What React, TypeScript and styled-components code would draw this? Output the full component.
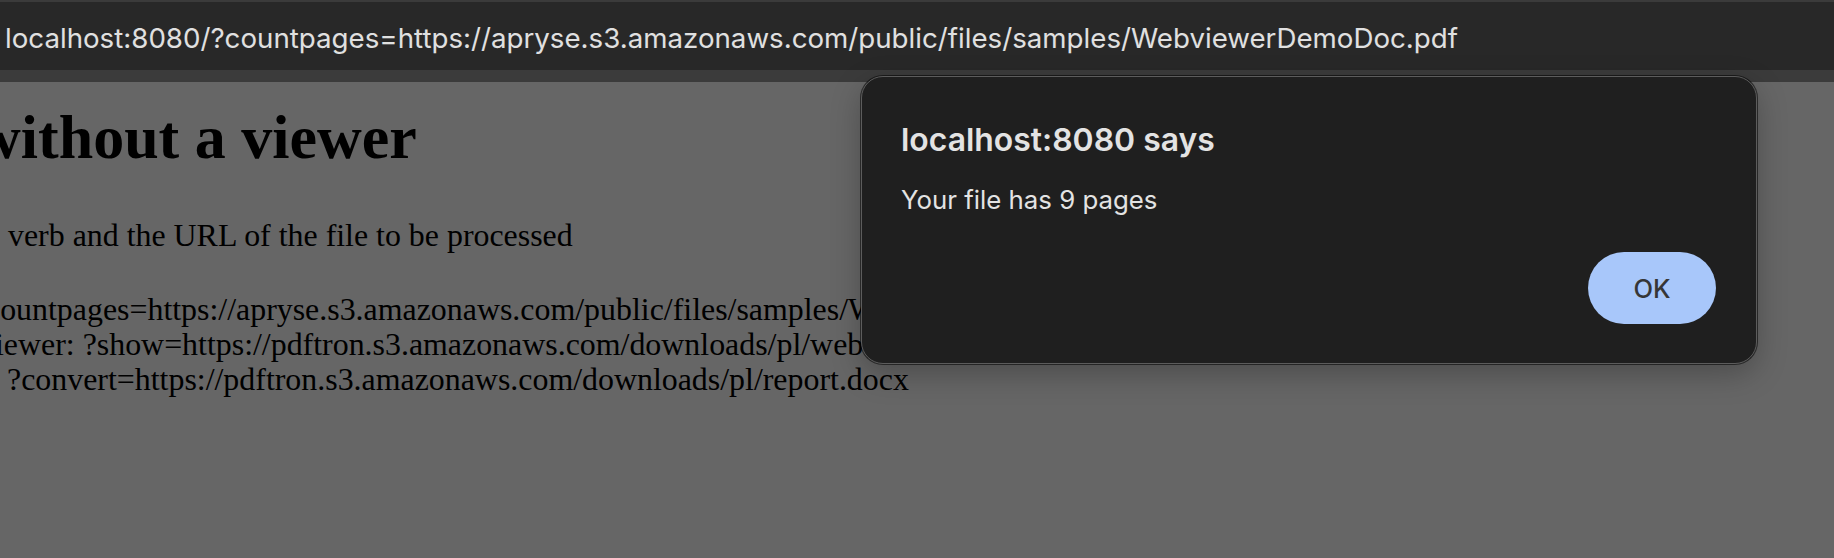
import styled, { createGlobalStyle } from "styled-components";

const GlobalStyle = createGlobalStyle`
  html, body {
    margin: 0;
    padding: 0;
    background: #666666;
  }
  * {
    box-sizing: border-box;
  }
`;

const pageUrl =
  "localhost:8080/?countpages=https://apryse.s3.amazonaws.com/public/files/samples/WebviewerDemoDoc.pdf";

const lines = [
  {
    text: "countpages=https://apryse.s3.amazonaws.com/public/files/samples/WebviewerDemoDoc.pdf",
    shift: -14,
  },
  {
    text: "iewer: ?show=https://pdftron.s3.amazonaws.com/downloads/pl/webviewer-demo.pdf",
    shift: -5,
  },
  {
    text: "?convert=https://pdftron.s3.amazonaws.com/downloads/pl/report.docx",
    shift: 7,
  },
];

export default function App() {
  return (
    <>
      <GlobalStyle />
      <Screen>
        <Toolbar>
          <AddressBar>
            <UrlText>{pageUrl}</UrlText>
          </AddressBar>
        </Toolbar>
        <Page>
          <Heading $shift={-24}>without a viewer</Heading>
          <Para $shift={8}>verb and the URL of the file to be processed</Para>
          <List>
            {lines.map((line) => (
              <Line key={line.text} $shift={line.shift}>
                {line.text}
              </Line>
            ))}
          </List>
        </Page>
        <Alert role="alertdialog">
          <AlertTitle>localhost:8080 says</AlertTitle>
          <AlertMessage>Your file has 9 pages</AlertMessage>
          <AlertFooter>
            <OkButton type="button">OK</OkButton>
          </AlertFooter>
        </Alert>
      </Screen>
    </>
  );
}

const Screen = styled.div`
  position: relative;
  display: flex;
  flex-direction: column;
  width: 100%;
  height: 100vh;
  overflow: hidden;
`;

const Toolbar = styled.div`
  flex: 0 0 82px;
  border-top: 2px solid #3b3b3b;
  border-bottom: 12px solid #3b3b3b;
  background: #282828;
`;

const AddressBar = styled.div`
  display: flex;
  align-items: center;
  height: 100%;
  padding: 0 0 0 5px;
`;

const UrlText = styled.span`
  font-family: Inter, "Noto Sans", sans-serif;
  font-size: 27.7px;
  line-height: 34px;
  color: #e0e0e0;
  white-space: nowrap;
  margin-top: 4px;
`;

const Page = styled.main`
  flex: 1;
  display: flex;
  flex-direction: column;
  padding-top: 20px;
  background: #666666;
  overflow: hidden;
  font-family: "Liberation Serif", "Times New Roman", serif;
  color: #000;
`;

const Heading = styled.h1<{ $shift: number }>`
  margin: 0 0 46px ${(p) => p.$shift}px;
  font-size: 62px;
  line-height: 70px;
  font-weight: 700;
  white-space: nowrap;
`;

const Para = styled.p<{ $shift: number }>`
  margin: 0 0 39px ${(p) => p.$shift}px;
  font-size: 31.9px;
  line-height: 35px;
  white-space: nowrap;
`;

const List = styled.div`
  display: flex;
  flex-direction: column;
`;

const Line = styled.div<{ $shift: number }>`
  margin-left: ${(p) => p.$shift}px;
  font-size: 31.9px;
  line-height: 35px;
  white-space: nowrap;
`;

const Alert = styled.div`
  position: absolute;
  left: 861px;
  top: 76px;
  width: 896px;
  height: 288px;
  display: flex;
  flex-direction: column;
  padding: 44px 40px 39px 39px;
  background: #1f1f1f;
  border: 1px solid #5c5c5c;
  border-radius: 22px;
  box-shadow: 0 0 0 1px rgba(0, 0, 0, 0.55), 0 10px 30px rgba(0, 0, 0, 0.25);
  font-family: Inter, "Noto Sans", sans-serif;
  color: #e3e3e3;
`;

const AlertTitle = styled.div`
  font-size: 31.9px;
  line-height: 38px;
  font-weight: 600;
  white-space: nowrap;
`;

const AlertMessage = styled.div`
  margin-top: 25px;
  font-size: 25.8px;
  line-height: 32px;
  white-space: nowrap;
`;

const AlertFooter = styled.div`
  display: flex;
  justify-content: flex-end;
  margin-top: auto;
`;

const OkButton = styled.button`
  width: 128px;
  height: 72px;
  border: none;
  border-radius: 36px;
  background: #a8c7fa;
  color: #363636;
  font-family: Inter, "Noto Sans", sans-serif;
  font-size: 25.5px;
  font-weight: 500;
  cursor: pointer;
`;
